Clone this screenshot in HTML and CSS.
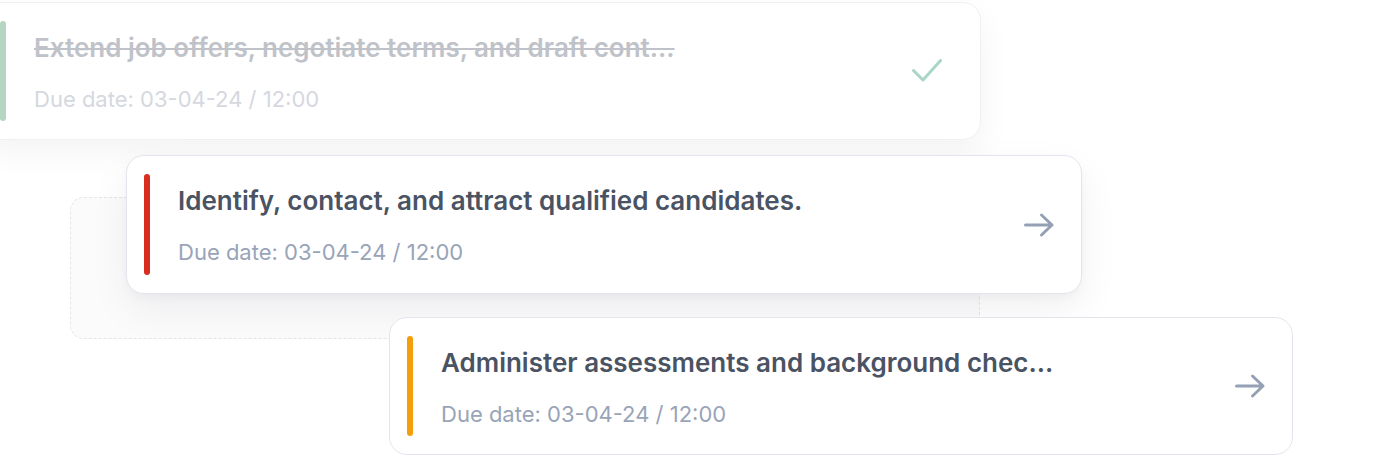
FILE: index.html
```html
<!DOCTYPE html>
<html lang="en">
<head>
<meta charset="utf-8">
<title>Tasks</title>
<link rel="stylesheet" href="styles.css">
</head>
<body>
<div class="board">
  <div class="drop-zone"></div>

  <div class="card card--done">
    <span class="card__bar bar--green"></span>
    <div class="card__body">
      <div class="card__title">Extend job offers, negotiate terms, and draft cont...</div>
      <div class="card__date">Due date: 03-04-24 / 12:00</div>
    </div>
    <svg class="card__icon icon-check" width="30" height="24" viewBox="0 0 30 24" fill="none">
      <path d="M1.5 11.5 L11 21 L28.5 1.5" stroke="currentColor" stroke-width="3" stroke-linecap="round" stroke-linejoin="round"/>
    </svg>
  </div>

  <div class="card card--drag">
    <span class="card__bar bar--red"></span>
    <div class="card__body">
      <div class="card__title">Identify, contact, and attract qualified candidates.</div>
      <div class="card__date">Due date: 03-04-24 / 12:00</div>
    </div>
    <svg class="card__icon icon-arrow" width="32" height="26" viewBox="0 0 32 26" fill="none">
      <path d="M2.5 13 H29 M18.5 3 L29 13 L18.5 23" stroke="currentColor" stroke-width="3" stroke-linecap="round" stroke-linejoin="round"/>
    </svg>
  </div>

  <div class="card card--next">
    <span class="card__bar bar--orange"></span>
    <div class="card__body">
      <div class="card__title">Administer assessments and background chec...</div>
      <div class="card__date">Due date: 03-04-24 / 12:00</div>
    </div>
    <svg class="card__icon icon-arrow" width="32" height="26" viewBox="0 0 32 26" fill="none">
      <path d="M2.5 13 H29 M18.5 3 L29 13 L18.5 23" stroke="currentColor" stroke-width="3" stroke-linecap="round" stroke-linejoin="round"/>
    </svg>
  </div>
</div>
</body>
</html>
```

FILE: styles.css
```css
* { box-sizing: border-box; }

html, body {
  margin: 0;
  padding: 0;
  background: #ffffff;
  overflow: hidden;
}

body {
  font-family: "Inter", "Liberation Sans", sans-serif;
  width: 1378px;
  height: 460px;
}

.board {
  position: relative;
  display: flex;
  flex-direction: column;
  align-items: flex-start;
  padding-top: 2px;
}

.drop-zone {
  position: absolute;
  left: 70px;
  top: 197px;
  width: 910px;
  height: 142px;
  border: 1px dashed #e3e6ea;
  border-radius: 14px;
  background: #fbfbfc;
  z-index: 0;
}

.card {
  position: relative;
  z-index: 1;
  display: flex;
  align-items: center;
  height: 138px;
  padding: 18px 26px 18px 17px;
  background: #ffffff;
  border: 1.5px solid #e2e6ec;
  border-radius: 18px;
}

.card__bar {
  flex: none;
  width: 6px;
  align-self: stretch;
  border-radius: 3px;
}

.bar--green { background: #b4d6c2; }
.bar--red { background: #d92d20; }
.bar--orange { background: #f59e0b; }

.card__body {
  flex: 1;
  margin-left: 28px;
  padding-top: 2px;
  display: flex;
  flex-direction: column;
  gap: 21px;
}

.card__title {
  font-size: 26px;
  line-height: 32px;
  font-weight: 600;
  color: #4a5363;
  white-space: nowrap;
}

.card__date {
  font-size: 22px;
  line-height: 28px;
  font-weight: 400;
  color: #98a4b8;
  white-space: nowrap;
}

.card__icon {
  flex: none;
  display: block;
}

.icon-arrow { color: #94a0b4; }
.icon-check { color: #a9d6c6; }

/* completed card, faded */
.card--done {
  margin-left: -18px;
  width: 999px;
  padding-right: 38px;
  border-color: #eef0f3;
  box-shadow: 0 12px 32px rgba(16, 24, 40, 0.05);
}

.card--done .card__title {
  color: #bfc3c9;
  text-decoration: line-through;
  text-decoration-thickness: 2px;
}

.card--done .card__date {
  color: #d5d8de;
}

/* dragged card */
.card--drag {
  margin-top: 15px;
  margin-left: 126px;
  width: 956px;
  height: 139px;
  box-shadow: 0 16px 40px rgba(16, 24, 40, 0.06), 0 4px 10px rgba(16, 24, 40, 0.03);
}

.card--next {
  margin-top: 23px;
  margin-left: 389px;
  width: 904px;
}
```
